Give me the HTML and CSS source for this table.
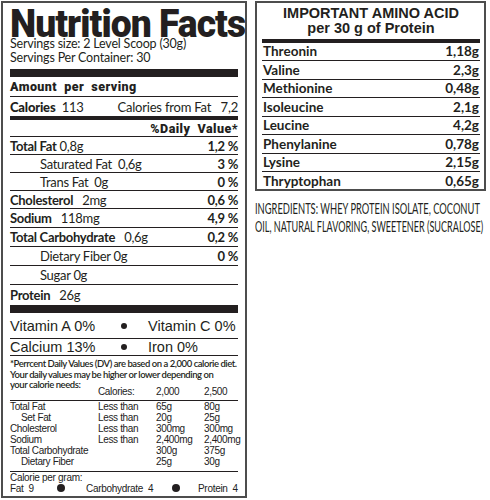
FILE: index.html
```html
<!DOCTYPE html>
<html lang="en">
<head>
<meta charset="utf-8">
<title>Nutrition Facts</title>
<link rel="stylesheet" href="styles.css">
</head>
<body>
<div class="page">
  <section class="label">
    <h1 class="title">Nutrition Facts</h1>
    <div class="serving">
      <div>Servings size: 2 Level Scoop (30g)</div>
      <div>Servings Per Container: 30</div>
    </div>
    <div class="bar bar-8"></div>
    <div class="row amount heavy">Amount&nbsp; per&nbsp; serving</div>
    <div class="row calories"><span><b>Calories</b>&nbsp; 113</span><span>Calories from Fat&nbsp;&nbsp; 7,2</span></div>
    <div class="row dv heavy">%Daily&nbsp; Value*</div>
    <div class="row n r1"><span><b>Total Fat</b> 0,8g</span><b>1,2 %</b></div>
    <div class="row n r2 ind"><span>Saturated Fat&nbsp; 0,6g</span><b>3 %</b></div>
    <div class="row n r3 ind"><span>Trans Fat&nbsp; 0g</span><b>0 %</b></div>
    <div class="row n r4"><span><b>Cholesterol</b>&nbsp;&nbsp; 2mg</span><b>0,6 %</b></div>
    <div class="row n r5"><span><b>Sodium</b>&nbsp;&nbsp; 118mg</span><b>4,9 %</b></div>
    <div class="row n r6"><span><b>Total Carbohydrate</b>&nbsp;&nbsp; 0,6g</span><b>0,2 %</b></div>
    <div class="row n r7 ind"><span>Dietary Fiber 0g</span><b>0 %</b></div>
    <div class="row n r8 ind"><span>Sugar 0g</span></div>
    <div class="row n protein"><span><b>Protein</b>&nbsp;&nbsp; 26g</span></div>
    <div class="bar bar-8"></div>
    <div class="vit vit-a"><span>Vitamin A 0%</span><i class="dot"></i><span class="vit-r">Vitamin C 0%</span></div>
    <div class="vit vit-b"><span>Calcium 13%</span><i class="dot"></i><span class="vit-r">Iron 0%</span></div>
    <div class="foot">
      <p class="note">*Perrcent Daily Values (DV) are based on a 2,000 calorie diet.<br>Your daily values may be higher or lower depending on<br>your calorie needs:</p>
      <div class="dvtable head">
        <span></span><span>Calories:</span><span>2,000</span><span>2,500</span>
      </div>
      <div class="dvtable body">
        <span>Total Fat</span><span>Less than</span><span>65g</span><span>80g</span>
        <span class="sub">Set Fat</span><span>Less than</span><span>20g</span><span>25g</span>
        <span>Cholesterol</span><span>Less than</span><span>300mg</span><span>300mg</span>
        <span>Sodium</span><span>Less than</span><span>2,400mg</span><span>2,400mg</span>
        <span>Total Carbohydrate</span><span></span><span>300g</span><span>375g</span>
        <span class="sub">Dietary Fiber</span><span></span><span>25g</span><span>30g</span>
      </div>
      <div class="pergram">
        <div>Calorie per gram:</div>
        <div class="pg-row"><span>Fat&nbsp; 9</span><i class="dot big"></i><span class="pg-c">Carbohydrate&nbsp; 4</span><i class="dot big"></i><span class="pg-p">Protein&nbsp; 4</span></div>
      </div>
    </div>
  </section>

  <div class="side">
    <section class="amino">
      <h2 class="amino-title">IMPORTANT AMINO ACID<br>per 30 g of Protein</h2>
      <div class="bar bar-3"></div>
      <div class="arow"><span>Threonin</span><span>1,18g</span></div>
      <div class="arow"><span>Valine</span><span>2,3g</span></div>
      <div class="arow"><span>Methionine</span><span>0,48g</span></div>
      <div class="arow"><span>Isoleucine</span><span>2,1g</span></div>
      <div class="arow"><span>Leucine</span><span>4,2g</span></div>
      <div class="arow"><span>Phenylanine</span><span>0,78g</span></div>
      <div class="arow"><span>Lysine</span><span>2,15g</span></div>
      <div class="arow last"><span>Thryptophan</span><span>0,65g</span></div>
    </section>
    <p class="ingredients"><span class="ing ing-1">INGREDIENTS: WHEY PROTEIN ISOLATE, COCONUT</span><span class="ing ing-2">OIL, NATURAL FLAVORING, SWEETENER (SUCRALOSE)</span></p>
  </div>
</div>
</body>
</html>
```

FILE: styles.css
```css
* { box-sizing: border-box; }
html, body { margin: 0; background: #fff; }
body {
  padding: 1px;
  color: #231f20;
  font-family: Lato, "Open Sans", sans-serif;
  overflow: hidden;
}
.page {
  display: flex;
  align-items: flex-start;
  gap: 8px;
}

/* ---------- left label ---------- */
.label {
  width: 247px;
  height: 497px;
  border: 2px solid #4d4d4d;
  padding: 0 7px;
  display: flex;
  flex-direction: column;
  overflow: hidden;
}
.title {
  margin: 0;
  padding-top: 8px;
  height: 34px;
  font-family: Roboto, "Liberation Sans", sans-serif;
  font-weight: 900;
  font-size: 39px;
  line-height: 26px;
  letter-spacing: -1px;
  white-space: nowrap;
  transform: scaleX(0.955);
  transform-origin: left top;
  flex: none;
}
.serving {
  font-size: 12.5px;
  line-height: 14px;
  letter-spacing: -0.2px;
  white-space: nowrap;
}
.bar { background: #231f20; flex: none; }
.bar-8 { height: 8px; margin-top: 4px; }

.row {
  display: flex;
  justify-content: space-between;
  align-items: center;
  border-bottom: 1px solid #231f20;
  white-space: nowrap;
  flex: none;
}
.heavy {
  font-family: Roboto, "Liberation Sans", sans-serif;
  font-weight: 900;
  font-size: 12.5px;
  letter-spacing: 0.45px;
}
.amount { height: 20px; border-bottom-width: 1.5px; }
.calories {
  height: 23px;
  border-bottom-width: 4px;
  font-size: 13px;
  letter-spacing: -0.2px;
}
.calories b { font-weight: 900; }
.dv { height: 17px; justify-content: flex-end; }

.n {
  font-size: 13px;
  letter-spacing: -0.3px;
  height: 18px;
}
.n b { font-weight: 700; }
.r5, .r6, .r7, .r8 { height: 19px; }
.ind { padding-left: 30px; }
.protein { height: 20px; border-bottom: 0; }
.protein + .bar-8 { margin-top: 0; }

.vit {
  display: grid;
  grid-template-columns: 100px 28px 1fr;
  align-items: center;
  font-family: "Liberation Sans", Arial, sans-serif;
  font-size: 14.5px;
  border-bottom: 1px solid #231f20;
  flex: none;
}
.vit-a { height: 26px; }
.vit-b { height: 17px; }
.vit-r { padding-left: 10px; }
.dot {
  display: block;
  justify-self: center;
  width: 6px;
  height: 6px;
  border-radius: 50%;
  background: #231f20;
}
.dot.big { width: 8px; height: 8px; }

.foot { flex: 1; display: flex; flex-direction: column; }
.note {
  margin: 3px 0 0;
  font-size: 9.5px;
  font-weight: 600;
  letter-spacing: -0.45px;
  line-height: 10.5px;
  white-space: nowrap;
}
.dvtable {
  display: grid;
  grid-template-columns: 88px 58px 48px 1fr;
  font-family: "Liberation Sans", Arial, sans-serif;
  font-size: 10px;
  letter-spacing: -0.35px;
  color: #222;
  white-space: nowrap;
}
.dvtable.head {
  margin-top: -6px;
  height: 16px;
  line-height: 11px;
  padding-bottom: 3px;
  align-items: end;
  border-bottom: 1px solid #231f20;
}
.dvtable.body {
  line-height: 11px;
  padding-bottom: 4px;
  border-bottom: 1px solid #231f20;
}
.sub { padding-left: 11px; }
.pergram {
  font-family: "Liberation Sans", Arial, sans-serif;
  font-size: 10px;
  letter-spacing: -0.3px;
  color: #222;
  line-height: 11px;
}
.pg-row {
  display: grid;
  grid-template-columns: 45px 12px 103px 12px 1fr;
  align-items: center;
}
.pg-c { padding-left: 19px; }
.pg-p { padding-left: 16px; }

/* ---------- right column ---------- */
.side { width: 234px; }
.amino {
  width: 231px;
  height: 190px;
  border: 2px solid #4d4d4d;
  padding: 0 4px 0 5px;
  display: flex;
  flex-direction: column;
}
.amino-title {
  margin: 0;
  padding-top: 3px;
  height: 36px;
  text-align: center;
  font-family: "Liberation Sans", Arial, sans-serif;
  font-weight: 700;
  font-size: 14.5px;
  line-height: 15px;
}
.bar-3 { height: 3.5px; margin-top: 0; }
.arow {
  display: flex;
  justify-content: space-between;
  align-items: center;
  height: 18.5px;
  border-bottom: 1px solid #231f20;
  font-weight: 700;
  font-size: 13.5px;
  padding: 0 1px;
  flex: none;
}
.arow.last { border-bottom: 0; flex: 1; }

.ingredients {
  margin: 9px 0 0;
  font-size: 14.5px;
  line-height: 18px;
  white-space: nowrap;
}
.ing {
  display: block;
  width: max-content;
  transform-origin: left top;
}
.ing-1 { transform: scaleX(0.645); }
.ing-2 { transform: scaleX(0.625); }
```
